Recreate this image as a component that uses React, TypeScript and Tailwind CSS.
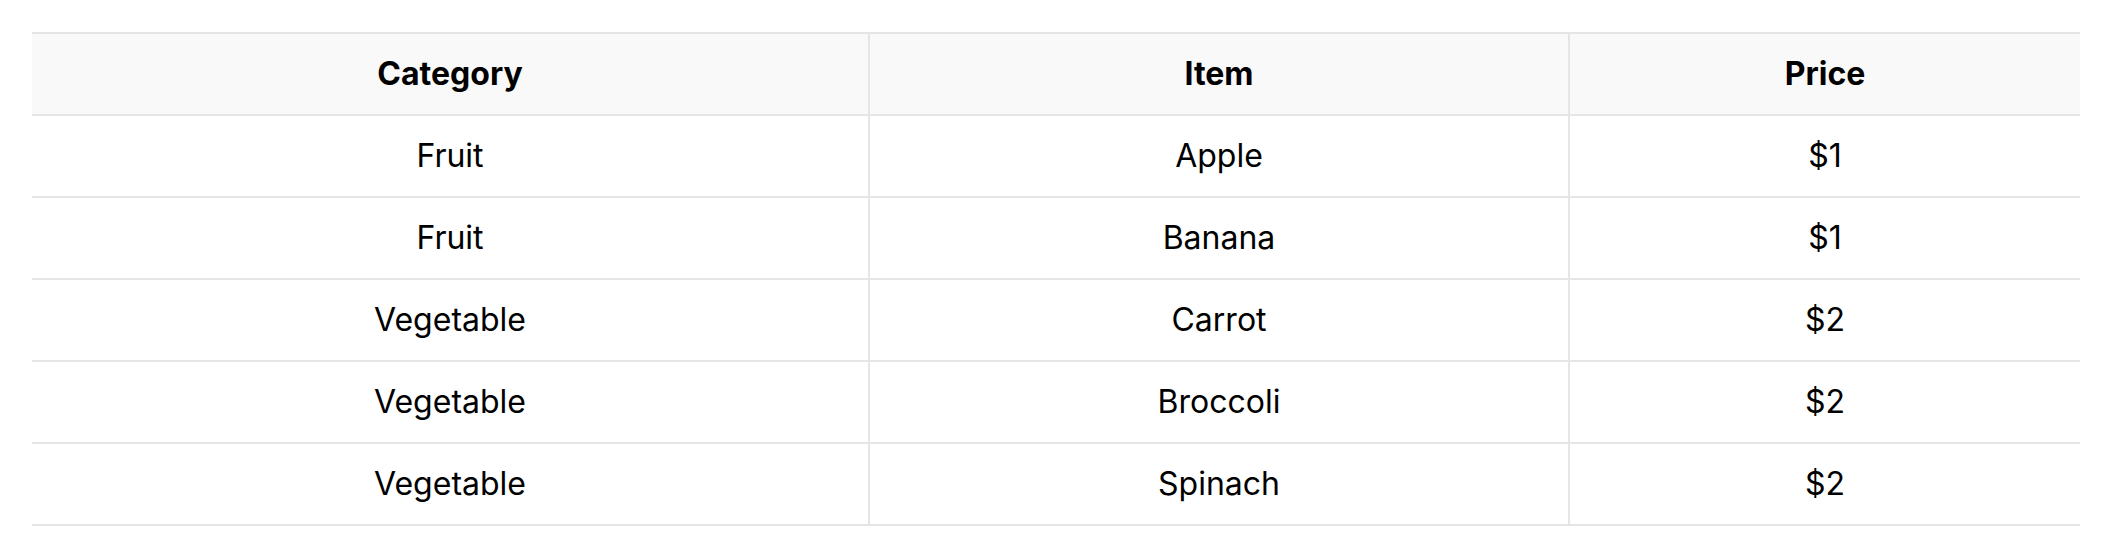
const ROWS: { category: string; item: string; price: string }[] = [
  { category: 'Fruit', item: 'Apple', price: '$1' },
  { category: 'Fruit', item: 'Banana', price: '$1' },
  { category: 'Vegetable', item: 'Carrot', price: '$2' },
  { category: 'Vegetable', item: 'Broccoli', price: '$2' },
  { category: 'Vegetable', item: 'Spinach', price: '$2' },
];

export default function App() {
  return (
    <div className="min-h-screen bg-white p-8 font-['Inter','Noto_Sans',sans-serif] text-black">
      <table className="w-[2048px] table-fixed border-collapse text-[32px] leading-[48px]">
        <colgroup>
          <col className="w-[837px]" />
          <col className="w-[700px]" />
          <col />
        </colgroup>
        <thead>
          <tr className="bg-[#f9f9f9]">
            <th className="border-y-2 border-r-2 border-[#e5e5e5] py-4 font-bold">Category</th>
            <th className="border-y-2 border-r-2 border-[#e5e5e5] py-4 font-bold">Item</th>
            <th className="border-y-2 border-[#e5e5e5] py-4 font-bold">Price</th>
          </tr>
        </thead>
        <tbody>
          {ROWS.map(r => (
            <tr key={r.item}>
              <td className="border-b-2 border-r-2 border-[#e5e5e5] py-4 text-center">{r.category}</td>
              <td className="border-b-2 border-r-2 border-[#e5e5e5] py-4 text-center">{r.item}</td>
              <td className="border-b-2 border-[#e5e5e5] py-4 text-center">{r.price}</td>
            </tr>
          ))}
        </tbody>
      </table>
    </div>
  );
}
